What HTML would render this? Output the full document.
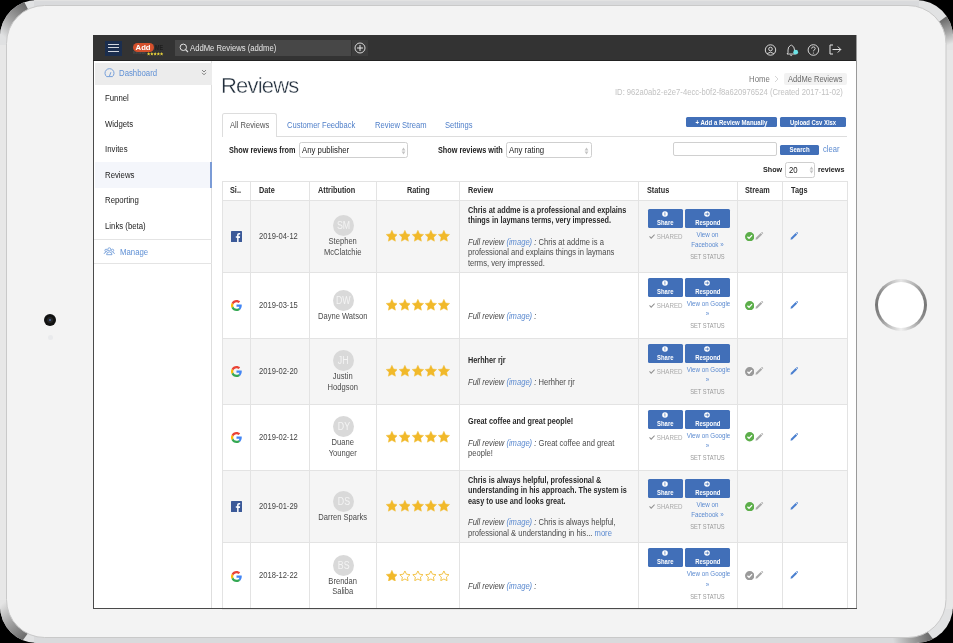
<!DOCTYPE html>
<html><head><meta charset="utf-8">
<style>
*{box-sizing:border-box;margin:0;padding:0}
html,body{width:953px;height:643px;overflow:hidden;background:#000;font-family:"Liberation Sans",sans-serif}
.a{position:absolute}
.frame{left:0;top:0;width:953px;height:643px;border-radius:36px;background:#dadbdd}
.inner{left:7px;top:6px;width:939px;height:631px;border-radius:30px;background:#f3f3f3}
.screen{left:93px;top:35px;width:764px;height:574px;background:#fff;border:1px solid #4a4a4a;border-right-color:#9a9a9a;border-top:none;overflow:hidden}
.hdr{left:93px;top:35px;width:763px;height:25px;background:#333}
.hdrline{left:93px;top:60px;width:763px;height:1px;background:#222}
.side{left:94px;top:61px;width:118px;height:547px;background:#fff;border-right:1px solid #dcdcdc}
.nav{left:104.5px;font-size:7.8px;color:#333;line-height:10px}
.t{white-space:nowrap;line-height:10px;transform-origin:0 50%}
.th{font-size:8.2px;font-weight:bold;color:#2b2b2b;transform:scaleX(0.89)}
.td{font-size:8.2px;color:#454545;transform:scaleX(0.927)}
.av{width:21px;height:21px;border-radius:50%;background:#d9d9d9;color:#f4f4f4;font-size:10px;line-height:21px;text-align:center}
.av span{display:inline-block;transform:scaleX(0.88)}
.nm{font-size:8.2px;color:#4a4a4a;text-align:center;line-height:10.4px;transform:scaleX(0.927);transform-origin:50% 50%}
.stars{line-height:0;white-space:nowrap;font-size:0}
.stars svg{margin-right:1.3px}
.rb{font-size:8.2px;font-weight:bold;color:#2b2b2b;transform:scaleX(0.89)}
.rf{font-size:8.2px;color:#4a4a4a;transform:scaleX(0.927)}
.lk{color:#5b8ad0}
.btn{height:19.3px;border-radius:1.5px;background:#416fb8;color:#fff;font-weight:bold;font-size:7.4px;line-height:8px;text-align:center;padding-top:2.3px;white-space:nowrap}
.btn span{display:inline-block;transform:scaleX(0.8)}
.btn svg{display:inline-block;vertical-align:0}
.sh{font-size:6.7px;color:#aaa;transform:scaleX(0.927)}
.vw{font-size:6.7px;color:#5b8ad0;text-align:center;transform:scaleX(0.927);transform-origin:50% 50%}
.ss{font-size:7.1px;color:#999;text-align:center;transform:scaleX(0.81);transform-origin:50% 50%}
.wrap{position:absolute;left:0;top:0;width:953px;height:643px;will-change:transform}
</style></head><body><div class="wrap">
<svg class="a" style="left:0;top:0" width="953" height="643" viewBox="0 0 953 643">
<defs>
<clipPath id="oc"><rect x="0" y="0" width="953" height="643" rx="37" ry="37"/></clipPath>
<linearGradient id="gtl" gradientUnits="userSpaceOnUse" x1="27" y1="7" x2="2" y2="35"><stop offset="0" stop-color="#6c6c6c"/><stop offset="0.55" stop-color="#a3a3a3"/><stop offset="1" stop-color="#e0e1e2"/></linearGradient>
<linearGradient id="gtr" gradientUnits="userSpaceOnUse" x1="941.5" y1="20" x2="951" y2="44"><stop offset="0" stop-color="#6c6c6c"/><stop offset="0.55" stop-color="#a8a8a8"/><stop offset="1" stop-color="#e4e4e4"/></linearGradient>
<linearGradient id="gbl" gradientUnits="userSpaceOnUse" x1="27" y1="635" x2="2" y2="604"><stop offset="0" stop-color="#6c6c6c"/><stop offset="0.55" stop-color="#a8a8a8"/><stop offset="1" stop-color="#e4e4e4"/></linearGradient>
<linearGradient id="gbr" gradientUnits="userSpaceOnUse" x1="929" y1="634" x2="893" y2="641"><stop offset="0" stop-color="#6c6c6c"/><stop offset="0.55" stop-color="#a8a8a8"/><stop offset="1" stop-color="#d9dadc"/></linearGradient>
</defs>
<g clip-path="url(#oc)">
<rect x="0" y="0" width="953" height="643" fill="#e1e2e3"/>
<rect x="34" y="0" width="885" height="8" fill="#d9dadc"/>
<rect x="34" y="0" width="885" height="1.2" fill="#e2e2e2"/>
<rect x="34" y="635" width="885" height="8" fill="#d9dadc"/>
<rect x="0" y="34" width="8" height="575" fill="#e7e7e7"/>
<rect x="945" y="34" width="8" height="575" fill="#e7e7e7"/>
<path d="M24.5 2.5 L31 15 L12 45 L-5 45 L-5 -5 L23 -5 Z" fill="url(#gtl)"/>
<path d="M960 6.4 L934.5 25 L934.5 50 L960 50 Z" fill="url(#gtr)"/>
<path d="M17.1 648 L31.5 628.5 L31.5 600 L-5 600 L-5 648 Z" fill="url(#gbl)"/>
<path d="M922.3 625.1 L937.6 644.9 L880 645 L880 625 Z" fill="url(#gbr)"/>
</g>
<rect x="6.5" y="5.5" width="939.5" height="632" rx="38" ry="38" fill="#f3f3f3" stroke="#c9c9c9" stroke-width="1"/>
</svg>
<!-- camera -->
<div class="a" style="left:44px;top:314px;width:12px;height:12px;border-radius:50%;background:#111"></div>
<div class="a" style="left:47px;top:317px;width:6px;height:6px;border-radius:50%;background:#262626"></div><div class="a" style="left:49px;top:319px;width:2.4px;height:2.4px;border-radius:50%;background:#4d6aa8"></div>
<div class="a" style="left:48px;top:335px;width:5px;height:5px;border-radius:50%;background:#e9eaec"></div>
<!-- home button -->
<div class="a" style="left:874.5px;top:279px;width:52px;height:52px;border-radius:50%;background:conic-gradient(#e6e6e6 0deg,#8a8a8a 60deg,#777 90deg,#8a8a8a 120deg,#f0f0f0 180deg,#8a8a8a 240deg,#777 270deg,#8a8a8a 300deg,#e6e6e6 360deg)"></div>
<div class="a" style="left:877.5px;top:282px;width:46px;height:46px;border-radius:50%;background:#fff"></div>

<div class="a screen"></div>
<div class="a hdr"></div>
<div class="a hdrline"></div>

<!-- header contents -->
<div class="a" style="left:104.5px;top:40.5px;width:17.5px;height:15.5px;background:#1b2e4e"></div>
<div class="a" style="left:108.4px;top:43.9px;width:10.6px;height:1px;background:#d3d7de"></div>
<div class="a" style="left:108.4px;top:47.4px;width:10.6px;height:1px;background:#d3d7de"></div>
<div class="a" style="left:108.4px;top:50.9px;width:10.6px;height:1px;background:#d3d7de"></div>
<div class="a" style="left:132.7px;top:43px;width:21.5px;height:9.2px;border-radius:4.6px;background:#d4502c"></div>
<div class="a t" style="left:135.6px;top:43.3px;font-size:7.7px;font-weight:bold;color:#fff;line-height:9px">Add</div>
<div class="a t" style="left:155.3px;top:43.8px;font-size:6.4px;font-weight:bold;color:#1e1e1e;line-height:7px;transform:scaleX(0.85);transform-origin:0 50%">ME</div>
<div class="a t" style="left:133px;top:52.2px;font-size:3.4px;color:#5a5a5a;line-height:3.6px">Reviews</div>
<svg class="a" style="left:147px;top:52.2px" width="16.5" height="3.6" viewBox="0 0 16.5 3.6"><g fill="#e9d43c"><path id="ms" d="M1.6 0 L2.1 1.2 L3.3 1.3 L2.4 2.1 L2.7 3.4 L1.6 2.7 L0.5 3.4 L0.8 2.1 L0 1.3 L1.2 1.2Z"/><use href="#ms" x="3.25"/><use href="#ms" x="6.5"/><use href="#ms" x="9.75"/><use href="#ms" x="13"/></g></svg>
<div class="a" style="left:175px;top:40px;width:176px;height:15.6px;background:#474747"></div>
<svg class="a" style="left:179px;top:43px" width="10" height="10" viewBox="0 0 10 10"><circle cx="4.3" cy="4.3" r="3.2" fill="none" stroke="#e4e4e4" stroke-width="1"/><line x1="6.6" y1="6.6" x2="9" y2="9" stroke="#e4e4e4" stroke-width="1.1"/></svg>
<div class="a t" style="left:190.3px;top:43px;font-size:8.31px;color:#e6e6e6;transform:scaleX(0.927);transform-origin:0 50%">AddMe Reviews (addme)</div>
<div class="a" style="left:352px;top:40px;width:16px;height:16px;background:#3c3c3c"></div>
<svg class="a" style="left:354px;top:42px" width="12" height="12" viewBox="0 0 12 12"><circle cx="6" cy="6" r="5" fill="none" stroke="#e8e8e8" stroke-width="0.9"/><line x1="6" y1="3" x2="6" y2="9" stroke="#e8e8e8" stroke-width="1"/><line x1="3" y1="6" x2="9" y2="6" stroke="#e8e8e8" stroke-width="1"/></svg>
<svg class="a" style="left:764px;top:43.5px" width="13" height="13" viewBox="0 0 13 13"><circle cx="6.5" cy="6" r="5.2" fill="none" stroke="#e6e6e6" stroke-width="0.9"/><circle cx="6.5" cy="5" r="1.8" fill="none" stroke="#e6e6e6" stroke-width="0.9"/><path d="M3.2 9.6 Q6.5 6.8 9.8 9.6" fill="none" stroke="#e6e6e6" stroke-width="0.9"/></svg>
<svg class="a" style="left:786px;top:43.5px" width="13" height="13" viewBox="0 0 13 13"><path d="M4.5 1.5 Q4.8 1 5.2 1 Q5.6 1 5.9 1.5 Q8.5 2.5 8.5 6 L8.5 8.5 L9.5 10 L1 10 L2 8.5 L2 6 Q2 2.5 4.5 1.5Z" fill="none" stroke="#e6e6e6" stroke-width="0.9"/><path d="M4.2 11 Q5.2 12.2 6.2 11" fill="none" stroke="#e6e6e6" stroke-width="0.9"/><circle cx="9.7" cy="8.2" r="2.4" fill="#6ee3e6"/></svg>
<svg class="a" style="left:807px;top:43.5px" width="13" height="13" viewBox="0 0 13 13"><circle cx="6.4" cy="6" r="5.3" fill="none" stroke="#e6e6e6" stroke-width="0.9"/><path d="M4.6 4.6 Q4.6 2.9 6.4 2.9 Q8.2 2.9 8.2 4.5 Q8.2 5.5 7 6.1 Q6.4 6.5 6.4 7.3" fill="none" stroke="#e6e6e6" stroke-width="0.9"/><circle cx="6.4" cy="9" r="0.6" fill="#e6e6e6"/></svg>
<svg class="a" style="left:829px;top:44px" width="13" height="11" viewBox="0 0 13 11"><path d="M4 1 L1 1 L1 10 L4 10" fill="none" stroke="#e6e6e6" stroke-width="1"/><path d="M3.5 5.5 L11.8 5.5 M8.8 2.5 L11.8 5.5 L8.8 8.5" fill="none" stroke="#e6e6e6" stroke-width="1"/></svg>

<!-- sidebar -->
<div class="a" style="left:94px;top:61px;width:118px;height:547px;background:#fff;border-right:1px solid #dedede"></div>
<div class="a" style="left:95px;top:63px;width:116.5px;height:22px;background:#ececec"></div>
<svg class="a" style="left:103.5px;top:68px" width="11" height="10" viewBox="0 0 11 10"><path d="M2.6 8.6 A4.5 4.5 0 1 1 8.4 8.6 Z" fill="none" stroke="#77a0da" stroke-width="1"/><line x1="5.4" y1="8.2" x2="6.9" y2="4.2" stroke="#77a0da" stroke-width="1"/></svg>
<div class="a t" style="left:118.6px;top:68.2px;font-size:8.41px;color:#5f90d5;transform:scaleX(0.927);transform-origin:0 50%">Dashboard</div>
<svg class="a" style="left:200.5px;top:68.5px" width="6" height="7" viewBox="0 0 6 7"><path d="M1 1 L3 3 L5 1 M1 3.8 L3 5.8 L5 3.8" fill="none" stroke="#777" stroke-width="0.9"/></svg>
<div class="a t" style="left:104.6px;top:93px;font-size:8.41px;color:#222;transform:scaleX(0.927);transform-origin:0 50%">Funnel</div>
<div class="a t" style="left:104.6px;top:118.5px;font-size:8.41px;color:#222;transform:scaleX(0.927);transform-origin:0 50%">Widgets</div>
<div class="a t" style="left:104.6px;top:144px;font-size:8.41px;color:#222;transform:scaleX(0.927);transform-origin:0 50%">Invites</div>
<div class="a" style="left:95px;top:162px;width:117px;height:25.6px;background:#f4f6fb"></div>
<div class="a" style="left:210px;top:162px;width:2px;height:25.6px;background:#7b9bd6"></div>
<div class="a t" style="left:104.6px;top:169.5px;font-size:8.41px;color:#222;transform:scaleX(0.927);transform-origin:0 50%">Reviews</div>
<div class="a t" style="left:104.6px;top:195px;font-size:8.41px;color:#222;transform:scaleX(0.927);transform-origin:0 50%">Reporting</div>
<div class="a t" style="left:104.6px;top:221px;font-size:8.41px;color:#222;transform:scaleX(0.927);transform-origin:0 50%">Links (beta)</div>
<div class="a" style="left:94px;top:239px;width:118px;height:1px;background:#e4e4e4"></div>
<svg class="a" style="left:103px;top:246px" width="13" height="11" viewBox="0 0 13 11"><g fill="none" stroke="#77a0da" stroke-width="0.9"><circle cx="6.3" cy="3.3" r="1.5"/><path d="M3.6 8.7 Q3.6 5.9 6.3 5.9 Q9 5.9 9 8.7 Z"/><circle cx="3.1" cy="4.4" r="1.2"/><path d="M1.1 7.9 Q1.4 6.3 2.9 6.3"/><circle cx="9.5" cy="4.4" r="1.2"/><path d="M11.5 7.9 Q11.2 6.3 9.7 6.3"/></g></svg>
<div class="a t" style="left:120px;top:247px;font-size:8.41px;color:#5f90d5;transform:scaleX(0.927);transform-origin:0 50%">Manage</div>
<div class="a" style="left:94px;top:262.5px;width:118px;height:1px;background:#e4e4e4"></div>

<!-- main top -->
<div class="a t" style="left:221px;top:73.5px;font-size:22px;line-height:24px;color:#1f2c3a;letter-spacing:-0.8px;-webkit-text-stroke:0.4px #fff">Reviews</div>
<div class="a t" style="left:748.8px;top:74.10px;font-size:8.41px;color:#777;transform:scaleX(0.927);transform-origin:0 50%">Home</div>
<svg class="a" style="left:774px;top:74.5px" width="5" height="8" viewBox="0 0 5 8"><path d="M1 1 L4 4 L1 7" fill="none" stroke="#ccc" stroke-width="0.8"/></svg>
<div class="a" style="left:783.6px;top:72.9px;width:63px;height:12.3px;border-radius:2px;background:#f2f2f2"></div>
<div class="a t" style="left:788px;top:74.60px;font-size:8.14px;color:#6a6a6a;transform:scaleX(0.927);transform-origin:0 50%">AddMe Reviews</div>
<div class="a t" style="left:615px;top:88.1px;font-size:8.24px;color:#c2c2c2;transform:scaleX(0.927);transform-origin:0 50%">ID: 962a0ab2-e2e7-4ecc-b0f2-f8a620976524 (Created 2017-11-02)</div>
<!-- tabs -->
<div class="a" style="left:222px;top:135.5px;width:625.4px;height:1px;background:#dddddd"></div>
<div class="a" style="left:221.7px;top:113.4px;width:55.8px;height:23.6px;background:#fff;border:1px solid #dddddd;border-bottom:none;border-radius:2.5px 2.5px 0 0"></div>
<div class="a t" style="left:230px;top:120.6px;font-size:8.2px;color:#555;transform:scaleX(0.927);transform-origin:0 50%">All Reviews</div>
<div class="a t" style="left:287.2px;top:120.7px;font-size:8.2px;color:#4f7fc9;transform:scaleX(0.927);transform-origin:0 50%">Customer Feedback</div>
<div class="a t" style="left:374.8px;top:120.7px;font-size:8.2px;color:#4f7fc9;transform:scaleX(0.927);transform-origin:0 50%">Review Stream</div>
<div class="a t" style="left:444.8px;top:120.7px;font-size:8.2px;color:#4f7fc9;transform:scaleX(0.927);transform-origin:0 50%">Settings</div>
<div class="a" style="left:686.2px;top:117.2px;width:90.9px;height:10.3px;border-radius:1.5px;background:#416fb8"></div>
<div class="a t" style="left:686.2px;top:117.6px;width:90.9px;text-align:center;font-size:6.8px;line-height:9.5px;font-weight:bold;color:#fff;transform:scaleX(0.89);transform-origin:50% 50%">+ Add a Review Manually</div>
<div class="a" style="left:780.3px;top:117.2px;width:66.1px;height:10.3px;border-radius:1.5px;background:#416fb8"></div>
<div class="a t" style="left:780.3px;top:117.6px;width:66.1px;text-align:center;font-size:6.63px;line-height:9.5px;font-weight:bold;color:#fff;transform:scaleX(0.89);transform-origin:50% 50%">Upload Csv Xlsx</div>
<!-- filters -->
<div class="a t" style="left:229.4px;top:145.8px;font-size:8.2px;font-weight:bold;color:#222;transform:scaleX(0.89);transform-origin:0 50%">Show reviews from</div>
<div class="a" style="left:298.7px;top:142.3px;width:109.8px;height:16.2px;border:1px solid #cfcfcf;border-radius:2.5px;background:#fff"></div>
<div class="a t" style="left:301.8px;top:145.3px;font-size:8.41px;color:#222;transform:scaleX(0.927);transform-origin:0 50%">Any publisher</div>
<svg class="a" style="left:401px;top:146.5px" width="5" height="8" viewBox="0 0 5 8"><path d="M0.6 3.4 L2.5 0.6 L4.4 3.4Z M0.6 4.6 L2.5 7.4 L4.4 4.6Z" fill="#c4c4c4"/></svg>
<div class="a t" style="left:437.7px;top:145.8px;font-size:8.2px;font-weight:bold;color:#222;transform:scaleX(0.89);transform-origin:0 50%">Show reviews with</div>
<div class="a" style="left:505.5px;top:142.3px;width:86px;height:16.2px;border:1px solid #cfcfcf;border-radius:2.5px;background:#fff"></div>
<div class="a t" style="left:508.6px;top:145.3px;font-size:8.41px;color:#222;transform:scaleX(0.927);transform-origin:0 50%">Any rating</div>
<svg class="a" style="left:584px;top:146.5px" width="5" height="8" viewBox="0 0 5 8"><path d="M0.6 3.4 L2.5 0.6 L4.4 3.4Z M0.6 4.6 L2.5 7.4 L4.4 4.6Z" fill="#c4c4c4"/></svg>
<div class="a" style="left:673.2px;top:141.7px;width:103.5px;height:14.7px;border:1px solid #d0d0d0;border-radius:2px;background:#fff"></div>
<div class="a" style="left:780px;top:144.9px;width:39px;height:10.1px;border-radius:1.5px;background:#416fb8"></div>
<div class="a t" style="left:780px;top:145.2px;width:39px;text-align:center;font-size:6.82px;line-height:9.5px;font-weight:bold;color:#fff;transform:scaleX(0.89);transform-origin:50% 50%">Search</div>
<div class="a t" style="left:822.6px;top:144.80px;font-size:8.2px;color:#5b8ad0;transform:scaleX(0.927);transform-origin:0 50%">clear</div>
<div class="a t" style="left:762.8px;top:165.4px;font-size:8.09px;font-weight:bold;color:#222;transform:scaleX(0.89);transform-origin:0 50%">Show</div>
<div class="a" style="left:785.3px;top:161.7px;width:30px;height:16.8px;border:1px solid #cfcfcf;border-radius:2.5px;background:#fff"></div>
<div class="a t" style="left:788.5px;top:164.9px;font-size:8.41px;color:#222;transform:scaleX(0.927);transform-origin:0 50%">20</div>
<svg class="a" style="left:808.5px;top:166px" width="5" height="8" viewBox="0 0 5 8"><path d="M0.6 3.4 L2.5 0.6 L4.4 3.4Z M0.6 4.6 L2.5 7.4 L4.4 4.6Z" fill="#c4c4c4"/></svg>
<div class="a t" style="left:817.8px;top:165.4px;font-size:8.09px;font-weight:bold;color:#222;transform:scaleX(0.89);transform-origin:0 50%">reviews</div>
<!--TABLE-->
<div class="a" style="left:222px;top:181px;width:625.4px;height:1px;background:#e3e3e3"></div>
<div class="a" style="left:222px;top:200px;width:625.4px;height:1px;background:#e3e3e3"></div>
<div class="a t th" style="left:229.5px;top:186.39999999999998px">Si..</div>
<div class="a t th" style="left:259px;top:186.39999999999998px">Date</div>
<div class="a t th" style="left:317.6px;top:186.39999999999998px">Attribution</div>
<div class="a t th" style="left:376.8px;width:82.8px;text-align:center;transform-origin:50% 50%;top:186.39999999999998px">Rating</div>
<div class="a t th" style="left:467.6px;top:186.39999999999998px">Review</div>
<div class="a t th" style="left:646.5px;top:186.39999999999998px">Status</div>
<div class="a t th" style="left:745.3px;top:186.39999999999998px">Stream</div>
<div class="a t th" style="left:790.8px;top:186.39999999999998px">Tags</div>
<div class="a" style="left:222px;top:201.2px;width:625.4px;height:71.10000000000002px;background:#f5f5f5"></div>
<div class="a" style="left:222px;top:272.3px;width:625.4px;height:1px;background:#e3e3e3"></div>
<div class="a" style="left:230.8px;top:231.15px;width:11px;height:11px;line-height:0"><svg width="11" height="11" viewBox="0 0 11 11"><rect width="11" height="11" rx="0.6" fill="#3b5998"/><path d="M7.6 11V6.9h1.3l0.2-1.6H7.6v-1c0-0.45 0.13-0.76 0.78-0.76h0.8V2.1C9 2.08 8.55 2.04 8.05 2.04c-1.15 0-1.95 0.7-1.95 2v1.2H4.8v1.6h1.3V11z" fill="#fff"/></svg></div>
<div class="a t td" style="left:259px;top:231.65px">2019-04-12</div>
<div class="a av" style="left:333.1px;top:215.35px"><span>SM</span></div>
<div class="a t nm" style="left:309.4px;width:67.4px;top:237.35px">Stephen</div>
<div class="a t nm" style="left:309.4px;width:67.4px;top:247.75px">McClatchie</div>
<div class="a stars" style="left:385.6px;top:230.45px"><svg width="11.8" height="11.4" viewBox="0 0 24 23"><path d="M12.00 0.50 L15.59 7.86 L23.70 9.00 L17.80 14.69 L19.23 22.75 L12.00 18.90 L4.77 22.75 L6.20 14.69 L0.30 9.00 L8.41 7.86Z" fill="#f1b92a" stroke="#f1b92a" stroke-width="0.8" stroke-linejoin="round"/></svg><svg width="11.8" height="11.4" viewBox="0 0 24 23"><path d="M12.00 0.50 L15.59 7.86 L23.70 9.00 L17.80 14.69 L19.23 22.75 L12.00 18.90 L4.77 22.75 L6.20 14.69 L0.30 9.00 L8.41 7.86Z" fill="#f1b92a" stroke="#f1b92a" stroke-width="0.8" stroke-linejoin="round"/></svg><svg width="11.8" height="11.4" viewBox="0 0 24 23"><path d="M12.00 0.50 L15.59 7.86 L23.70 9.00 L17.80 14.69 L19.23 22.75 L12.00 18.90 L4.77 22.75 L6.20 14.69 L0.30 9.00 L8.41 7.86Z" fill="#f1b92a" stroke="#f1b92a" stroke-width="0.8" stroke-linejoin="round"/></svg><svg width="11.8" height="11.4" viewBox="0 0 24 23"><path d="M12.00 0.50 L15.59 7.86 L23.70 9.00 L17.80 14.69 L19.23 22.75 L12.00 18.90 L4.77 22.75 L6.20 14.69 L0.30 9.00 L8.41 7.86Z" fill="#f1b92a" stroke="#f1b92a" stroke-width="0.8" stroke-linejoin="round"/></svg><svg width="11.8" height="11.4" viewBox="0 0 24 23"><path d="M12.00 0.50 L15.59 7.86 L23.70 9.00 L17.80 14.69 L19.23 22.75 L12.00 18.90 L4.77 22.75 L6.20 14.69 L0.30 9.00 L8.41 7.86Z" fill="#f1b92a" stroke="#f1b92a" stroke-width="0.8" stroke-linejoin="round"/></svg></div>
<div class="a t rb" style="left:467.6px;top:205.54999999999998px">Chris at addme is a professional and explains</div>
<div class="a t rb" style="left:467.6px;top:216.04999999999998px">things in laymans terms, very impressed.</div>
<div class="a t rf" style="left:467.6px;top:237.65px"><i>Full review</i> <span class="lk"><i>(image)</i></span><i> :</i> Chris at addme is a</div>
<div class="a t rf" style="left:467.6px;top:248.15px">professional and explains things in laymans</div>
<div class="a t rf" style="left:467.6px;top:258.65px">terms, very impressed.</div>
<div class="a btn" style="left:647.5px;top:208.75px;width:35.6px"><svg width='6' height='6' viewBox='0 0 6 6'><circle cx='3' cy='3' r='2.8' fill='#fff'/><path d='M2.4 1.6 L3.3 1.6 L3.3 4.6 L2.6 4.6 L2.6 2.4 Z' fill='#416fb8'/></svg><br><span>Share</span></div>
<div class="a btn" style="left:685px;top:208.75px;width:44.9px"><svg width='6' height='6' viewBox='0 0 6 6'><circle cx='3' cy='3' r='2.8' fill='#fff'/><path d='M1.3 3 L4.3 3 M3 1.7 L4.4 3 L3 4.3' fill='none' stroke='#416fb8' stroke-width='0.9'/></svg><br><span>Respond</span></div>
<div class="a t sh" style="left:648.5px;top:231.65px"><svg width="6.5" height="5" viewBox="0 0 7 5" style="vertical-align:0px"><path d="M0.6 2.4 L2.5 4.3 L6.5 0.4" fill="none" stroke="#8f8f8f" stroke-width="1.1"/></svg> SHARED</div>
<div class="a t vw" style="left:685px;width:44.9px;top:229.95px">View on</div>
<div class="a t vw" style="left:685px;width:44.9px;top:240.35px">Facebook &raquo;</div>
<div class="a t ss" style="left:685px;width:44.9px;top:252.35000000000002px">SET STATUS</div>
<div class="a" style="left:744.8px;top:231.55px;line-height:0"><svg width="9.4" height="9.4" viewBox="0 0 10 10"><circle cx="5" cy="5" r="5" fill="#5cae4a"/><path d="M2.6 5.1 L4.3 6.7 L7.5 3.4" fill="none" stroke="#fff" stroke-width="1.3"/></svg></div>
<div class="a" style="left:755.4px;top:231.95px;line-height:0"><svg width="8.2" height="8.2" viewBox="0 0 9 9"><path d="M0.6 8.4 L1 6.4 L6.3 1.1 L7.9 2.7 L2.6 8 Z" fill="#a9a9a9"/><path d="M6.9 0.5 L7.3 0.1 Q7.6 -0.1 7.9 0.1 L8.9 1.1 Q9.1 1.4 8.9 1.7 L8.5 2.1Z" fill="#a9a9a9"/></svg></div>
<div class="a" style="left:789.6px;top:231.85px;line-height:0"><svg width="8.2" height="8.2" viewBox="0 0 9 9"><path d="M0.6 8.4 L1 6.4 L6.3 1.1 L7.9 2.7 L2.6 8 Z" fill="#4a7fcf"/><path d="M6.9 0.5 L7.3 0.1 Q7.6 -0.1 7.9 0.1 L8.9 1.1 Q9.1 1.4 8.9 1.7 L8.5 2.1Z" fill="#4a7fcf"/></svg></div>
<div class="a" style="left:222px;top:273.3px;width:625.4px;height:64.89999999999998px;background:#fff"></div>
<div class="a" style="left:222px;top:338.2px;width:625.4px;height:1px;background:#e3e3e3"></div>
<div class="a" style="left:230.8px;top:300.15px;width:11px;height:11px;line-height:0"><svg width="11" height="11" viewBox="0 0 48 48"><path fill="#EA4335" d="M24 9.5c3.5 0 6.6 1.2 9.1 3.6l6.8-6.8C35.8 2.4 30.3 0 24 0 14.6 0 6.6 5.4 2.6 13.3l7.9 6.1C12.4 13.7 17.7 9.5 24 9.5z"/><path fill="#4285F4" d="M46.9 24.5c0-1.6-.1-3.1-.4-4.5H24v9h12.9c-.6 2.9-2.3 5.4-4.8 7.1l7.7 6c4.5-4.2 7.1-10.4 7.1-17.6z"/><path fill="#FBBC05" d="M10.5 28.6c-.5-1.4-.8-3-.8-4.6s.3-3.2.8-4.6l-7.9-6.1C.9 16.6 0 20.2 0 24s.9 7.4 2.6 10.7l7.9-6.1z"/><path fill="#34A853" d="M24 48c6.5 0 11.9-2.1 15.9-5.8l-7.7-6c-2.2 1.5-4.9 2.3-8.2 2.3-6.3 0-11.6-4.2-13.5-10l-7.9 6.1C6.6 42.6 14.6 48 24 48z"/></svg></div>
<div class="a t td" style="left:259px;top:300.65px">2019-03-15</div>
<div class="a av" style="left:333.1px;top:289.55px"><span>DW</span></div>
<div class="a t nm" style="left:309.4px;width:67.4px;top:311.55px">Dayne Watson</div>
<div class="a stars" style="left:385.6px;top:299.45px"><svg width="11.8" height="11.4" viewBox="0 0 24 23"><path d="M12.00 0.50 L15.59 7.86 L23.70 9.00 L17.80 14.69 L19.23 22.75 L12.00 18.90 L4.77 22.75 L6.20 14.69 L0.30 9.00 L8.41 7.86Z" fill="#f1b92a" stroke="#f1b92a" stroke-width="0.8" stroke-linejoin="round"/></svg><svg width="11.8" height="11.4" viewBox="0 0 24 23"><path d="M12.00 0.50 L15.59 7.86 L23.70 9.00 L17.80 14.69 L19.23 22.75 L12.00 18.90 L4.77 22.75 L6.20 14.69 L0.30 9.00 L8.41 7.86Z" fill="#f1b92a" stroke="#f1b92a" stroke-width="0.8" stroke-linejoin="round"/></svg><svg width="11.8" height="11.4" viewBox="0 0 24 23"><path d="M12.00 0.50 L15.59 7.86 L23.70 9.00 L17.80 14.69 L19.23 22.75 L12.00 18.90 L4.77 22.75 L6.20 14.69 L0.30 9.00 L8.41 7.86Z" fill="#f1b92a" stroke="#f1b92a" stroke-width="0.8" stroke-linejoin="round"/></svg><svg width="11.8" height="11.4" viewBox="0 0 24 23"><path d="M12.00 0.50 L15.59 7.86 L23.70 9.00 L17.80 14.69 L19.23 22.75 L12.00 18.90 L4.77 22.75 L6.20 14.69 L0.30 9.00 L8.41 7.86Z" fill="#f1b92a" stroke="#f1b92a" stroke-width="0.8" stroke-linejoin="round"/></svg><svg width="11.8" height="11.4" viewBox="0 0 24 23"><path d="M12.00 0.50 L15.59 7.86 L23.70 9.00 L17.80 14.69 L19.23 22.75 L12.00 18.90 L4.77 22.75 L6.20 14.69 L0.30 9.00 L8.41 7.86Z" fill="#f1b92a" stroke="#f1b92a" stroke-width="0.8" stroke-linejoin="round"/></svg></div>
<div class="a t rb" style="left:467.6px;top:290.3px"></div>
<div class="a t rf" style="left:467.6px;top:311.90000000000003px"><i>Full review</i> <span class="lk"><i>(image)</i></span><i> :</i> </div>
<div class="a btn" style="left:647.5px;top:277.75px;width:35.6px"><svg width='6' height='6' viewBox='0 0 6 6'><circle cx='3' cy='3' r='2.8' fill='#fff'/><path d='M2.4 1.6 L3.3 1.6 L3.3 4.6 L2.6 4.6 L2.6 2.4 Z' fill='#416fb8'/></svg><br><span>Share</span></div>
<div class="a btn" style="left:685px;top:277.75px;width:44.9px"><svg width='6' height='6' viewBox='0 0 6 6'><circle cx='3' cy='3' r='2.8' fill='#fff'/><path d='M1.3 3 L4.3 3 M3 1.7 L4.4 3 L3 4.3' fill='none' stroke='#416fb8' stroke-width='0.9'/></svg><br><span>Respond</span></div>
<div class="a t sh" style="left:648.5px;top:300.65px"><svg width="6.5" height="5" viewBox="0 0 7 5" style="vertical-align:0px"><path d="M0.6 2.4 L2.5 4.3 L6.5 0.4" fill="none" stroke="#8f8f8f" stroke-width="1.1"/></svg> SHARED</div>
<div class="a t vw" style="left:685px;width:44.9px;top:298.95px">View on Google</div>
<div class="a t vw" style="left:685px;width:44.9px;top:309.35px">&raquo;</div>
<div class="a t ss" style="left:685px;width:44.9px;top:321.35px">SET STATUS</div>
<div class="a" style="left:744.8px;top:300.55px;line-height:0"><svg width="9.4" height="9.4" viewBox="0 0 10 10"><circle cx="5" cy="5" r="5" fill="#5cae4a"/><path d="M2.6 5.1 L4.3 6.7 L7.5 3.4" fill="none" stroke="#fff" stroke-width="1.3"/></svg></div>
<div class="a" style="left:755.4px;top:300.95px;line-height:0"><svg width="8.2" height="8.2" viewBox="0 0 9 9"><path d="M0.6 8.4 L1 6.4 L6.3 1.1 L7.9 2.7 L2.6 8 Z" fill="#a9a9a9"/><path d="M6.9 0.5 L7.3 0.1 Q7.6 -0.1 7.9 0.1 L8.9 1.1 Q9.1 1.4 8.9 1.7 L8.5 2.1Z" fill="#a9a9a9"/></svg></div>
<div class="a" style="left:789.6px;top:300.85px;line-height:0"><svg width="8.2" height="8.2" viewBox="0 0 9 9"><path d="M0.6 8.4 L1 6.4 L6.3 1.1 L7.9 2.7 L2.6 8 Z" fill="#4a7fcf"/><path d="M6.9 0.5 L7.3 0.1 Q7.6 -0.1 7.9 0.1 L8.9 1.1 Q9.1 1.4 8.9 1.7 L8.5 2.1Z" fill="#4a7fcf"/></svg></div>
<div class="a" style="left:222px;top:339.2px;width:625.4px;height:65.0px;background:#f5f5f5"></div>
<div class="a" style="left:222px;top:404.2px;width:625.4px;height:1px;background:#e3e3e3"></div>
<div class="a" style="left:230.8px;top:366.09999999999997px;width:11px;height:11px;line-height:0"><svg width="11" height="11" viewBox="0 0 48 48"><path fill="#EA4335" d="M24 9.5c3.5 0 6.6 1.2 9.1 3.6l6.8-6.8C35.8 2.4 30.3 0 24 0 14.6 0 6.6 5.4 2.6 13.3l7.9 6.1C12.4 13.7 17.7 9.5 24 9.5z"/><path fill="#4285F4" d="M46.9 24.5c0-1.6-.1-3.1-.4-4.5H24v9h12.9c-.6 2.9-2.3 5.4-4.8 7.1l7.7 6c4.5-4.2 7.1-10.4 7.1-17.6z"/><path fill="#FBBC05" d="M10.5 28.6c-.5-1.4-.8-3-.8-4.6s.3-3.2.8-4.6l-7.9-6.1C.9 16.6 0 20.2 0 24s.9 7.4 2.6 10.7l7.9-6.1z"/><path fill="#34A853" d="M24 48c6.5 0 11.9-2.1 15.9-5.8l-7.7-6c-2.2 1.5-4.9 2.3-8.2 2.3-6.3 0-11.6-4.2-13.5-10l-7.9 6.1C6.6 42.6 14.6 48 24 48z"/></svg></div>
<div class="a t td" style="left:259px;top:366.59999999999997px">2019-02-20</div>
<div class="a av" style="left:333.1px;top:350.3px"><span>JH</span></div>
<div class="a t nm" style="left:309.4px;width:67.4px;top:372.3px">Justin</div>
<div class="a t nm" style="left:309.4px;width:67.4px;top:382.7px">Hodgson</div>
<div class="a stars" style="left:385.6px;top:365.4px"><svg width="11.8" height="11.4" viewBox="0 0 24 23"><path d="M12.00 0.50 L15.59 7.86 L23.70 9.00 L17.80 14.69 L19.23 22.75 L12.00 18.90 L4.77 22.75 L6.20 14.69 L0.30 9.00 L8.41 7.86Z" fill="#f1b92a" stroke="#f1b92a" stroke-width="0.8" stroke-linejoin="round"/></svg><svg width="11.8" height="11.4" viewBox="0 0 24 23"><path d="M12.00 0.50 L15.59 7.86 L23.70 9.00 L17.80 14.69 L19.23 22.75 L12.00 18.90 L4.77 22.75 L6.20 14.69 L0.30 9.00 L8.41 7.86Z" fill="#f1b92a" stroke="#f1b92a" stroke-width="0.8" stroke-linejoin="round"/></svg><svg width="11.8" height="11.4" viewBox="0 0 24 23"><path d="M12.00 0.50 L15.59 7.86 L23.70 9.00 L17.80 14.69 L19.23 22.75 L12.00 18.90 L4.77 22.75 L6.20 14.69 L0.30 9.00 L8.41 7.86Z" fill="#f1b92a" stroke="#f1b92a" stroke-width="0.8" stroke-linejoin="round"/></svg><svg width="11.8" height="11.4" viewBox="0 0 24 23"><path d="M12.00 0.50 L15.59 7.86 L23.70 9.00 L17.80 14.69 L19.23 22.75 L12.00 18.90 L4.77 22.75 L6.20 14.69 L0.30 9.00 L8.41 7.86Z" fill="#f1b92a" stroke="#f1b92a" stroke-width="0.8" stroke-linejoin="round"/></svg><svg width="11.8" height="11.4" viewBox="0 0 24 23"><path d="M12.00 0.50 L15.59 7.86 L23.70 9.00 L17.80 14.69 L19.23 22.75 L12.00 18.90 L4.77 22.75 L6.20 14.69 L0.30 9.00 L8.41 7.86Z" fill="#f1b92a" stroke="#f1b92a" stroke-width="0.8" stroke-linejoin="round"/></svg></div>
<div class="a t rb" style="left:467.6px;top:356.25px">Herhher rjr</div>
<div class="a t rf" style="left:467.6px;top:377.85px"><i>Full review</i> <span class="lk"><i>(image)</i></span><i> :</i> Herhher rjr</div>
<div class="a btn" style="left:647.5px;top:343.7px;width:35.6px"><svg width='6' height='6' viewBox='0 0 6 6'><circle cx='3' cy='3' r='2.8' fill='#fff'/><path d='M2.4 1.6 L3.3 1.6 L3.3 4.6 L2.6 4.6 L2.6 2.4 Z' fill='#416fb8'/></svg><br><span>Share</span></div>
<div class="a btn" style="left:685px;top:343.7px;width:44.9px"><svg width='6' height='6' viewBox='0 0 6 6'><circle cx='3' cy='3' r='2.8' fill='#fff'/><path d='M1.3 3 L4.3 3 M3 1.7 L4.4 3 L3 4.3' fill='none' stroke='#416fb8' stroke-width='0.9'/></svg><br><span>Respond</span></div>
<div class="a t sh" style="left:648.5px;top:366.59999999999997px"><svg width="6.5" height="5" viewBox="0 0 7 5" style="vertical-align:0px"><path d="M0.6 2.4 L2.5 4.3 L6.5 0.4" fill="none" stroke="#8f8f8f" stroke-width="1.1"/></svg> SHARED</div>
<div class="a t vw" style="left:685px;width:44.9px;top:364.9px">View on Google</div>
<div class="a t vw" style="left:685px;width:44.9px;top:375.3px">&raquo;</div>
<div class="a t ss" style="left:685px;width:44.9px;top:387.3px">SET STATUS</div>
<div class="a" style="left:744.8px;top:366.5px;line-height:0"><svg width="9.4" height="9.4" viewBox="0 0 10 10"><circle cx="5" cy="5" r="5" fill="#9a9a9a"/><path d="M2.6 5.1 L4.3 6.7 L7.5 3.4" fill="none" stroke="#fff" stroke-width="1.3"/></svg></div>
<div class="a" style="left:755.4px;top:366.9px;line-height:0"><svg width="8.2" height="8.2" viewBox="0 0 9 9"><path d="M0.6 8.4 L1 6.4 L6.3 1.1 L7.9 2.7 L2.6 8 Z" fill="#a9a9a9"/><path d="M6.9 0.5 L7.3 0.1 Q7.6 -0.1 7.9 0.1 L8.9 1.1 Q9.1 1.4 8.9 1.7 L8.5 2.1Z" fill="#a9a9a9"/></svg></div>
<div class="a" style="left:789.6px;top:366.8px;line-height:0"><svg width="8.2" height="8.2" viewBox="0 0 9 9"><path d="M0.6 8.4 L1 6.4 L6.3 1.1 L7.9 2.7 L2.6 8 Z" fill="#4a7fcf"/><path d="M6.9 0.5 L7.3 0.1 Q7.6 -0.1 7.9 0.1 L8.9 1.1 Q9.1 1.4 8.9 1.7 L8.5 2.1Z" fill="#4a7fcf"/></svg></div>
<div class="a" style="left:222px;top:405.2px;width:625.4px;height:64.90000000000003px;background:#fff"></div>
<div class="a" style="left:222px;top:470.1px;width:625.4px;height:1px;background:#e3e3e3"></div>
<div class="a" style="left:230.8px;top:432.04999999999995px;width:11px;height:11px;line-height:0"><svg width="11" height="11" viewBox="0 0 48 48"><path fill="#EA4335" d="M24 9.5c3.5 0 6.6 1.2 9.1 3.6l6.8-6.8C35.8 2.4 30.3 0 24 0 14.6 0 6.6 5.4 2.6 13.3l7.9 6.1C12.4 13.7 17.7 9.5 24 9.5z"/><path fill="#4285F4" d="M46.9 24.5c0-1.6-.1-3.1-.4-4.5H24v9h12.9c-.6 2.9-2.3 5.4-4.8 7.1l7.7 6c4.5-4.2 7.1-10.4 7.1-17.6z"/><path fill="#FBBC05" d="M10.5 28.6c-.5-1.4-.8-3-.8-4.6s.3-3.2.8-4.6l-7.9-6.1C.9 16.6 0 20.2 0 24s.9 7.4 2.6 10.7l7.9-6.1z"/><path fill="#34A853" d="M24 48c6.5 0 11.9-2.1 15.9-5.8l-7.7-6c-2.2 1.5-4.9 2.3-8.2 2.3-6.3 0-11.6-4.2-13.5-10l-7.9 6.1C6.6 42.6 14.6 48 24 48z"/></svg></div>
<div class="a t td" style="left:259px;top:432.54999999999995px">2019-02-12</div>
<div class="a av" style="left:333.1px;top:416.25px"><span>DY</span></div>
<div class="a t nm" style="left:309.4px;width:67.4px;top:438.25px">Duane</div>
<div class="a t nm" style="left:309.4px;width:67.4px;top:448.65px">Younger</div>
<div class="a stars" style="left:385.6px;top:431.34999999999997px"><svg width="11.8" height="11.4" viewBox="0 0 24 23"><path d="M12.00 0.50 L15.59 7.86 L23.70 9.00 L17.80 14.69 L19.23 22.75 L12.00 18.90 L4.77 22.75 L6.20 14.69 L0.30 9.00 L8.41 7.86Z" fill="#f1b92a" stroke="#f1b92a" stroke-width="0.8" stroke-linejoin="round"/></svg><svg width="11.8" height="11.4" viewBox="0 0 24 23"><path d="M12.00 0.50 L15.59 7.86 L23.70 9.00 L17.80 14.69 L19.23 22.75 L12.00 18.90 L4.77 22.75 L6.20 14.69 L0.30 9.00 L8.41 7.86Z" fill="#f1b92a" stroke="#f1b92a" stroke-width="0.8" stroke-linejoin="round"/></svg><svg width="11.8" height="11.4" viewBox="0 0 24 23"><path d="M12.00 0.50 L15.59 7.86 L23.70 9.00 L17.80 14.69 L19.23 22.75 L12.00 18.90 L4.77 22.75 L6.20 14.69 L0.30 9.00 L8.41 7.86Z" fill="#f1b92a" stroke="#f1b92a" stroke-width="0.8" stroke-linejoin="round"/></svg><svg width="11.8" height="11.4" viewBox="0 0 24 23"><path d="M12.00 0.50 L15.59 7.86 L23.70 9.00 L17.80 14.69 L19.23 22.75 L12.00 18.90 L4.77 22.75 L6.20 14.69 L0.30 9.00 L8.41 7.86Z" fill="#f1b92a" stroke="#f1b92a" stroke-width="0.8" stroke-linejoin="round"/></svg><svg width="11.8" height="11.4" viewBox="0 0 24 23"><path d="M12.00 0.50 L15.59 7.86 L23.70 9.00 L17.80 14.69 L19.23 22.75 L12.00 18.90 L4.77 22.75 L6.20 14.69 L0.30 9.00 L8.41 7.86Z" fill="#f1b92a" stroke="#f1b92a" stroke-width="0.8" stroke-linejoin="round"/></svg></div>
<div class="a t rb" style="left:467.6px;top:416.95px">Great coffee and great people!</div>
<div class="a t rf" style="left:467.6px;top:438.55px"><i>Full review</i> <span class="lk"><i>(image)</i></span><i> :</i> Great coffee and great</div>
<div class="a t rf" style="left:467.6px;top:449.05px">people!</div>
<div class="a btn" style="left:647.5px;top:409.65px;width:35.6px"><svg width='6' height='6' viewBox='0 0 6 6'><circle cx='3' cy='3' r='2.8' fill='#fff'/><path d='M2.4 1.6 L3.3 1.6 L3.3 4.6 L2.6 4.6 L2.6 2.4 Z' fill='#416fb8'/></svg><br><span>Share</span></div>
<div class="a btn" style="left:685px;top:409.65px;width:44.9px"><svg width='6' height='6' viewBox='0 0 6 6'><circle cx='3' cy='3' r='2.8' fill='#fff'/><path d='M1.3 3 L4.3 3 M3 1.7 L4.4 3 L3 4.3' fill='none' stroke='#416fb8' stroke-width='0.9'/></svg><br><span>Respond</span></div>
<div class="a t sh" style="left:648.5px;top:432.54999999999995px"><svg width="6.5" height="5" viewBox="0 0 7 5" style="vertical-align:0px"><path d="M0.6 2.4 L2.5 4.3 L6.5 0.4" fill="none" stroke="#8f8f8f" stroke-width="1.1"/></svg> SHARED</div>
<div class="a t vw" style="left:685px;width:44.9px;top:430.84999999999997px">View on Google</div>
<div class="a t vw" style="left:685px;width:44.9px;top:441.25px">&raquo;</div>
<div class="a t ss" style="left:685px;width:44.9px;top:453.25px">SET STATUS</div>
<div class="a" style="left:744.8px;top:432.45px;line-height:0"><svg width="9.4" height="9.4" viewBox="0 0 10 10"><circle cx="5" cy="5" r="5" fill="#5cae4a"/><path d="M2.6 5.1 L4.3 6.7 L7.5 3.4" fill="none" stroke="#fff" stroke-width="1.3"/></svg></div>
<div class="a" style="left:755.4px;top:432.84999999999997px;line-height:0"><svg width="8.2" height="8.2" viewBox="0 0 9 9"><path d="M0.6 8.4 L1 6.4 L6.3 1.1 L7.9 2.7 L2.6 8 Z" fill="#a9a9a9"/><path d="M6.9 0.5 L7.3 0.1 Q7.6 -0.1 7.9 0.1 L8.9 1.1 Q9.1 1.4 8.9 1.7 L8.5 2.1Z" fill="#a9a9a9"/></svg></div>
<div class="a" style="left:789.6px;top:432.75px;line-height:0"><svg width="8.2" height="8.2" viewBox="0 0 9 9"><path d="M0.6 8.4 L1 6.4 L6.3 1.1 L7.9 2.7 L2.6 8 Z" fill="#4a7fcf"/><path d="M6.9 0.5 L7.3 0.1 Q7.6 -0.1 7.9 0.1 L8.9 1.1 Q9.1 1.4 8.9 1.7 L8.5 2.1Z" fill="#4a7fcf"/></svg></div>
<div class="a" style="left:222px;top:471.1px;width:625.4px;height:71.29999999999995px;background:#f5f5f5"></div>
<div class="a" style="left:222px;top:542.4px;width:625.4px;height:1px;background:#e3e3e3"></div>
<div class="a" style="left:230.8px;top:501.15px;width:11px;height:11px;line-height:0"><svg width="11" height="11" viewBox="0 0 11 11"><rect width="11" height="11" rx="0.6" fill="#3b5998"/><path d="M7.6 11V6.9h1.3l0.2-1.6H7.6v-1c0-0.45 0.13-0.76 0.78-0.76h0.8V2.1C9 2.08 8.55 2.04 8.05 2.04c-1.15 0-1.95 0.7-1.95 2v1.2H4.8v1.6h1.3V11z" fill="#fff"/></svg></div>
<div class="a t td" style="left:259px;top:501.65px">2019-01-29</div>
<div class="a av" style="left:333.1px;top:490.55px"><span>DS</span></div>
<div class="a t nm" style="left:309.4px;width:67.4px;top:512.55px">Darren Sparks</div>
<div class="a stars" style="left:385.6px;top:500.45px"><svg width="11.8" height="11.4" viewBox="0 0 24 23"><path d="M12.00 0.50 L15.59 7.86 L23.70 9.00 L17.80 14.69 L19.23 22.75 L12.00 18.90 L4.77 22.75 L6.20 14.69 L0.30 9.00 L8.41 7.86Z" fill="#f1b92a" stroke="#f1b92a" stroke-width="0.8" stroke-linejoin="round"/></svg><svg width="11.8" height="11.4" viewBox="0 0 24 23"><path d="M12.00 0.50 L15.59 7.86 L23.70 9.00 L17.80 14.69 L19.23 22.75 L12.00 18.90 L4.77 22.75 L6.20 14.69 L0.30 9.00 L8.41 7.86Z" fill="#f1b92a" stroke="#f1b92a" stroke-width="0.8" stroke-linejoin="round"/></svg><svg width="11.8" height="11.4" viewBox="0 0 24 23"><path d="M12.00 0.50 L15.59 7.86 L23.70 9.00 L17.80 14.69 L19.23 22.75 L12.00 18.90 L4.77 22.75 L6.20 14.69 L0.30 9.00 L8.41 7.86Z" fill="#f1b92a" stroke="#f1b92a" stroke-width="0.8" stroke-linejoin="round"/></svg><svg width="11.8" height="11.4" viewBox="0 0 24 23"><path d="M12.00 0.50 L15.59 7.86 L23.70 9.00 L17.80 14.69 L19.23 22.75 L12.00 18.90 L4.77 22.75 L6.20 14.69 L0.30 9.00 L8.41 7.86Z" fill="#f1b92a" stroke="#f1b92a" stroke-width="0.8" stroke-linejoin="round"/></svg><svg width="11.8" height="11.4" viewBox="0 0 24 23"><path d="M12.00 0.50 L15.59 7.86 L23.70 9.00 L17.80 14.69 L19.23 22.75 L12.00 18.90 L4.77 22.75 L6.20 14.69 L0.30 9.00 L8.41 7.86Z" fill="#f1b92a" stroke="#f1b92a" stroke-width="0.8" stroke-linejoin="round"/></svg></div>
<div class="a t rb" style="left:467.6px;top:475.55px">Chris is always helpful, professional &amp;</div>
<div class="a t rb" style="left:467.6px;top:486.05px">understanding in his approach. The system is</div>
<div class="a t rb" style="left:467.6px;top:496.55px">easy to use and looks great.</div>
<div class="a t rf" style="left:467.6px;top:518.15px"><i>Full review</i> <span class="lk"><i>(image)</i></span><i> :</i> Chris is always helpful,</div>
<div class="a t rf" style="left:467.6px;top:528.65px">professional &amp; understanding in his... <span class="lk" style="font-style:normal">more</span></div>
<div class="a btn" style="left:647.5px;top:478.75px;width:35.6px"><svg width='6' height='6' viewBox='0 0 6 6'><circle cx='3' cy='3' r='2.8' fill='#fff'/><path d='M2.4 1.6 L3.3 1.6 L3.3 4.6 L2.6 4.6 L2.6 2.4 Z' fill='#416fb8'/></svg><br><span>Share</span></div>
<div class="a btn" style="left:685px;top:478.75px;width:44.9px"><svg width='6' height='6' viewBox='0 0 6 6'><circle cx='3' cy='3' r='2.8' fill='#fff'/><path d='M1.3 3 L4.3 3 M3 1.7 L4.4 3 L3 4.3' fill='none' stroke='#416fb8' stroke-width='0.9'/></svg><br><span>Respond</span></div>
<div class="a t sh" style="left:648.5px;top:501.65px"><svg width="6.5" height="5" viewBox="0 0 7 5" style="vertical-align:0px"><path d="M0.6 2.4 L2.5 4.3 L6.5 0.4" fill="none" stroke="#8f8f8f" stroke-width="1.1"/></svg> SHARED</div>
<div class="a t vw" style="left:685px;width:44.9px;top:499.95px">View on</div>
<div class="a t vw" style="left:685px;width:44.9px;top:510.35px">Facebook &raquo;</div>
<div class="a t ss" style="left:685px;width:44.9px;top:522.35px">SET STATUS</div>
<div class="a" style="left:744.8px;top:501.55px;line-height:0"><svg width="9.4" height="9.4" viewBox="0 0 10 10"><circle cx="5" cy="5" r="5" fill="#5cae4a"/><path d="M2.6 5.1 L4.3 6.7 L7.5 3.4" fill="none" stroke="#fff" stroke-width="1.3"/></svg></div>
<div class="a" style="left:755.4px;top:501.95px;line-height:0"><svg width="8.2" height="8.2" viewBox="0 0 9 9"><path d="M0.6 8.4 L1 6.4 L6.3 1.1 L7.9 2.7 L2.6 8 Z" fill="#a9a9a9"/><path d="M6.9 0.5 L7.3 0.1 Q7.6 -0.1 7.9 0.1 L8.9 1.1 Q9.1 1.4 8.9 1.7 L8.5 2.1Z" fill="#a9a9a9"/></svg></div>
<div class="a" style="left:789.6px;top:501.85px;line-height:0"><svg width="8.2" height="8.2" viewBox="0 0 9 9"><path d="M0.6 8.4 L1 6.4 L6.3 1.1 L7.9 2.7 L2.6 8 Z" fill="#4a7fcf"/><path d="M6.9 0.5 L7.3 0.1 Q7.6 -0.1 7.9 0.1 L8.9 1.1 Q9.1 1.4 8.9 1.7 L8.5 2.1Z" fill="#4a7fcf"/></svg></div>
<div class="a" style="left:222px;top:543.4px;width:625.4px;height:65.60000000000002px;background:#fff"></div>
<div class="a" style="left:222px;top:609.0px;width:625.4px;height:1px;background:#e3e3e3"></div>
<div class="a" style="left:230.8px;top:570.6px;width:11px;height:11px;line-height:0"><svg width="11" height="11" viewBox="0 0 48 48"><path fill="#EA4335" d="M24 9.5c3.5 0 6.6 1.2 9.1 3.6l6.8-6.8C35.8 2.4 30.3 0 24 0 14.6 0 6.6 5.4 2.6 13.3l7.9 6.1C12.4 13.7 17.7 9.5 24 9.5z"/><path fill="#4285F4" d="M46.9 24.5c0-1.6-.1-3.1-.4-4.5H24v9h12.9c-.6 2.9-2.3 5.4-4.8 7.1l7.7 6c4.5-4.2 7.1-10.4 7.1-17.6z"/><path fill="#FBBC05" d="M10.5 28.6c-.5-1.4-.8-3-.8-4.6s.3-3.2.8-4.6l-7.9-6.1C.9 16.6 0 20.2 0 24s.9 7.4 2.6 10.7l7.9-6.1z"/><path fill="#34A853" d="M24 48c6.5 0 11.9-2.1 15.9-5.8l-7.7-6c-2.2 1.5-4.9 2.3-8.2 2.3-6.3 0-11.6-4.2-13.5-10l-7.9 6.1C6.6 42.6 14.6 48 24 48z"/></svg></div>
<div class="a t td" style="left:259px;top:571.1px">2018-12-22</div>
<div class="a av" style="left:333.1px;top:554.8000000000001px"><span>BS</span></div>
<div class="a t nm" style="left:309.4px;width:67.4px;top:576.8000000000001px">Brendan</div>
<div class="a t nm" style="left:309.4px;width:67.4px;top:587.2px">Saliba</div>
<div class="a stars" style="left:385.6px;top:569.9000000000001px"><svg width="11.8" height="11.4" viewBox="0 0 24 23"><path d="M12.00 0.50 L15.59 7.86 L23.70 9.00 L17.80 14.69 L19.23 22.75 L12.00 18.90 L4.77 22.75 L6.20 14.69 L0.30 9.00 L8.41 7.86Z" fill="#f1b92a" stroke="#f1b92a" stroke-width="0.8" stroke-linejoin="round"/></svg><svg width="11.8" height="11.4" viewBox="0 0 24 23"><path d="M12.00 1.90 L15.17 8.43 L22.37 9.43 L17.14 14.47 L18.41 21.62 L12.00 18.20 L5.59 21.62 L6.86 14.47 L1.63 9.43 L8.83 8.43Z" fill="none" stroke="#f1b92a" stroke-width="1.7" stroke-linejoin="round"/></svg><svg width="11.8" height="11.4" viewBox="0 0 24 23"><path d="M12.00 1.90 L15.17 8.43 L22.37 9.43 L17.14 14.47 L18.41 21.62 L12.00 18.20 L5.59 21.62 L6.86 14.47 L1.63 9.43 L8.83 8.43Z" fill="none" stroke="#f1b92a" stroke-width="1.7" stroke-linejoin="round"/></svg><svg width="11.8" height="11.4" viewBox="0 0 24 23"><path d="M12.00 1.90 L15.17 8.43 L22.37 9.43 L17.14 14.47 L18.41 21.62 L12.00 18.20 L5.59 21.62 L6.86 14.47 L1.63 9.43 L8.83 8.43Z" fill="none" stroke="#f1b92a" stroke-width="1.7" stroke-linejoin="round"/></svg><svg width="11.8" height="11.4" viewBox="0 0 24 23"><path d="M12.00 1.90 L15.17 8.43 L22.37 9.43 L17.14 14.47 L18.41 21.62 L12.00 18.20 L5.59 21.62 L6.86 14.47 L1.63 9.43 L8.83 8.43Z" fill="none" stroke="#f1b92a" stroke-width="1.7" stroke-linejoin="round"/></svg></div>
<div class="a t rb" style="left:467.6px;top:560.7500000000001px"></div>
<div class="a t rf" style="left:467.6px;top:582.35px"><i>Full review</i> <span class="lk"><i>(image)</i></span><i> :</i> </div>
<div class="a btn" style="left:647.5px;top:548.2px;width:35.6px"><svg width='6' height='6' viewBox='0 0 6 6'><circle cx='3' cy='3' r='2.8' fill='#fff'/><path d='M2.4 1.6 L3.3 1.6 L3.3 4.6 L2.6 4.6 L2.6 2.4 Z' fill='#416fb8'/></svg><br><span>Share</span></div>
<div class="a btn" style="left:685px;top:548.2px;width:44.9px"><svg width='6' height='6' viewBox='0 0 6 6'><circle cx='3' cy='3' r='2.8' fill='#fff'/><path d='M1.3 3 L4.3 3 M3 1.7 L4.4 3 L3 4.3' fill='none' stroke='#416fb8' stroke-width='0.9'/></svg><br><span>Respond</span></div>
<div class="a t vw" style="left:685px;width:44.9px;top:569.4000000000001px">View on Google</div>
<div class="a t vw" style="left:685px;width:44.9px;top:579.8000000000001px">&raquo;</div>
<div class="a t ss" style="left:685px;width:44.9px;top:591.8000000000001px">SET STATUS</div>
<div class="a" style="left:744.8px;top:571.0px;line-height:0"><svg width="9.4" height="9.4" viewBox="0 0 10 10"><circle cx="5" cy="5" r="5" fill="#9a9a9a"/><path d="M2.6 5.1 L4.3 6.7 L7.5 3.4" fill="none" stroke="#fff" stroke-width="1.3"/></svg></div>
<div class="a" style="left:755.4px;top:571.4000000000001px;line-height:0"><svg width="8.2" height="8.2" viewBox="0 0 9 9"><path d="M0.6 8.4 L1 6.4 L6.3 1.1 L7.9 2.7 L2.6 8 Z" fill="#a9a9a9"/><path d="M6.9 0.5 L7.3 0.1 Q7.6 -0.1 7.9 0.1 L8.9 1.1 Q9.1 1.4 8.9 1.7 L8.5 2.1Z" fill="#a9a9a9"/></svg></div>
<div class="a" style="left:789.6px;top:571.3000000000001px;line-height:0"><svg width="8.2" height="8.2" viewBox="0 0 9 9"><path d="M0.6 8.4 L1 6.4 L6.3 1.1 L7.9 2.7 L2.6 8 Z" fill="#4a7fcf"/><path d="M6.9 0.5 L7.3 0.1 Q7.6 -0.1 7.9 0.1 L8.9 1.1 Q9.1 1.4 8.9 1.7 L8.5 2.1Z" fill="#4a7fcf"/></svg></div>
<div class="a" style="left:222px;top:181px;width:1px;height:428px;background:#e3e3e3"></div>
<div class="a" style="left:250px;top:181px;width:1px;height:428px;background:#e3e3e3"></div>
<div class="a" style="left:309px;top:181px;width:1px;height:428px;background:#e3e3e3"></div>
<div class="a" style="left:376px;top:181px;width:1px;height:428px;background:#e3e3e3"></div>
<div class="a" style="left:459px;top:181px;width:1px;height:428px;background:#e3e3e3"></div>
<div class="a" style="left:638px;top:181px;width:1px;height:428px;background:#e3e3e3"></div>
<div class="a" style="left:737px;top:181px;width:1px;height:428px;background:#e3e3e3"></div>
<div class="a" style="left:782px;top:181px;width:1px;height:428px;background:#e3e3e3"></div>
<div class="a" style="left:847px;top:181px;width:1px;height:428px;background:#e3e3e3"></div>
<!--/TABLE-->
<div class="a" style="left:93px;top:608px;width:764px;height:1px;background:#4a4a4a"></div>
</div></body></html>
